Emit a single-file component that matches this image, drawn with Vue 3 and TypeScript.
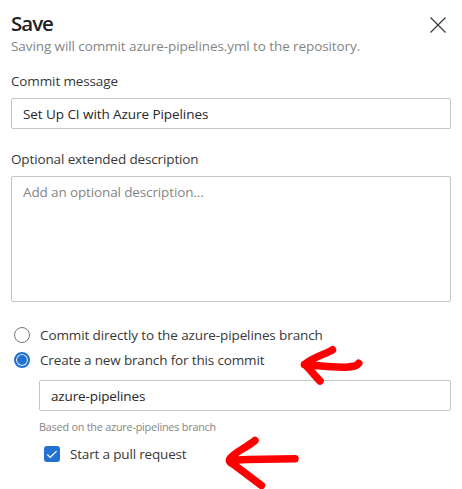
<script setup lang="ts">
import { ref } from 'vue'

const message = ref('Set Up CI with Azure Pipelines')
const description = ref('')
const target = ref<'direct' | 'branch'>('branch')
const branchName = ref('azure-pipelines')
const startPullRequest = ref(true)
</script>

<template>
  <main class="panel">
    <header class="header">
      <div>
        <h1 class="title">Save</h1>
        <p class="subtitle">Saving will commit azure-pipelines.yml to the repository.</p>
      </div>
      <button class="close" type="button" aria-label="Close">
        <svg width="16" height="16" viewBox="0 0 16 16"><path d="M.5 .5l15 15M15.5 .5l-15 15" /></svg>
      </button>
    </header>

    <label class="label" for="message">Commit message</label>
    <input id="message" v-model="message" class="field message" type="text" />

    <label class="label label-description" for="description">Optional extended description</label>
    <textarea id="description" v-model="description" class="field description" placeholder="Add an optional description..."></textarea>

    <div class="choices">
      <label class="choice">
        <input v-model="target" class="radio" type="radio" value="direct" />
        <span class="direct-text">Commit directly to the azure-pipelines branch</span>
      </label>
      <label class="choice">
        <input v-model="target" class="radio" type="radio" value="branch" />
        <span class="branch-text">Create a new branch for this commit</span>
      </label>
    </div>

    <section class="branch">
      <input v-model="branchName" class="field branch-name" type="text" aria-label="Branch name" />
      <p class="hint">Based on the azure-pipelines branch</p>
      <label class="pull-request">
        <input v-model="startPullRequest" class="native-check" type="checkbox" />
        <span class="checkbox">
          <svg v-if="startPullRequest" width="16" height="16" viewBox="0 0 16 16"><path d="M3.2 8.3l3 3 6.4-6.2" /></svg>
        </span>
        <span class="pull-text">Start a pull request</span>
      </label>
    </section>

    <svg class="marks" width="462" height="489" viewBox="0 0 462 489" aria-hidden="true">
      <path d="M332.500 349.800C326 354 313 357 304.500 364.500C311 370 314 375 320 381M304.500 364.500C322 366 337 368 348 367C354 366.500 357 366 358.700 363.300" />
      <path d="M255 440.500C246 448 235 452 230.500 458C228 461 230 463 235 465.500L261.500 485.500M231 463C234 459 238 460 248 459.500L295 458.700" />
    </svg>
  </main>
</template>

<style>
body {
  background: #fff;
}
</style>

<style scoped>
.panel {
  position: relative;
  box-sizing: border-box;
  width: 462px;
  height: 489px;
  padding: 11px 11px 0;
  overflow: hidden;
  color: #383838;
  background: #fff;
  font-family: "Open Sans", "Noto Sans", sans-serif;
  font-size: 13.5px;
  line-height: 20px;
  letter-spacing: -0.13px;
}

.header {
  display: flex;
  justify-content: space-between;
  height: 60px;
}

.title {
  margin: 0;
  height: 25px;
  color: #222;
  font-size: 20.5px;
  font-weight: 600;
  line-height: 25px;
  letter-spacing: -1px;
}

.subtitle {
  margin: 0;
  color: #858585;
  white-space: nowrap;
  letter-spacing: -0.09px;
}

.close {
  width: 16px;
  height: 16px;
  margin: 6px 5px 0 0;
  padding: 0;
  border: 0;
  background: none;
}

.close svg {
  display: block;
  fill: none;
  stroke: #333;
  stroke-width: 1.1;
}

.label {
  display: block;
  height: 27px;
  white-space: nowrap;
}

.field {
  display: block;
  box-sizing: border-box;
  width: 440px;
  height: 31px;
  margin: 0;
  padding: 0 11px;
  border: 1px solid #c4c4c4;
  border-radius: 2px;
  outline: none;
  color: #282828;
  background: #fff;
  font: inherit;
  letter-spacing: inherit;
  resize: none;
}

.message {
  letter-spacing: -0.07px;
}

.label-description {
  margin-top: 20px;
}

.description {
  height: 126px;
  padding-top: 5px;
}

.description::placeholder {
  color: #858585;
  opacity: 1;
}

.choices {
  padding: 20px 3px 0;
}

.choice {
  display: flex;
  align-items: center;
  gap: 10px;
  height: 25px;
  white-space: nowrap;
}

.direct-text {
  letter-spacing: -0.11px;
}

.branch-text {
  letter-spacing: -0.15px;
}

.radio {
  appearance: none;
  box-sizing: border-box;
  width: 16px;
  height: 16px;
  margin: 0;
  border: 1px solid #777;
  border-radius: 50%;
}

.radio:checked {
  border: 2px solid #2372d2;
  background: #2372d2;
  box-shadow: inset 0 0 0 1px #fff;
}

.branch {
  padding: 8px 0 0 28px;
}

.branch-name {
  width: 412px;
}

.hint {
  height: 17px;
  margin: 7px 0 0;
  color: #858585;
  font-size: 10.8px;
  line-height: 17px;
  letter-spacing: -0.2px;
}

.pull-request {
  display: flex;
  align-items: center;
  height: 20px;
  margin-top: 9px;
  padding-left: 5px;
}

.pull-text {
  letter-spacing: -0.17px;
}

.native-check {
  position: absolute;
  opacity: 0;
}

.checkbox {
  width: 16px;
  height: 16px;
  margin-right: 10px;
  border-radius: 3px;
  background: #2372d2;
}

.checkbox svg {
  display: block;
  fill: none;
  stroke: #fff;
  stroke-width: 1.2;
}

.marks {
  position: absolute;
  top: 0;
  left: 0;
  pointer-events: none;
  fill: none;
  stroke: #f00;
  stroke-width: 7.5;
  stroke-linecap: round;
  stroke-linejoin: round;
}
</style>
